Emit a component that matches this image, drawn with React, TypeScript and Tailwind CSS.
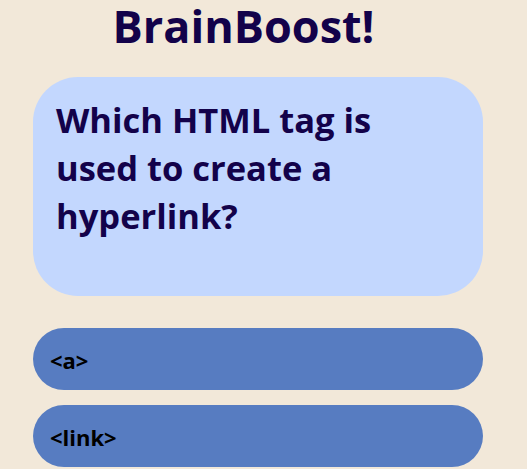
import React from "react";

export default function App() {
  return (
    <div className="min-h-[469px] w-full bg-[#f2e8d9] font-['Open_Sans','Noto_Sans',sans-serif]">
      <div className="flex flex-col pl-[33px] pr-[44px]">
        <h1 className="pr-[29px] text-center text-[45px] font-bold leading-[52px] text-[#13024a]">
          BrainBoost!
        </h1>
        <div className="mt-[25px] h-[219px] rounded-[45px] bg-[#c3d7fe] pl-[23px] pt-[19px]">
          <p className="text-[34.5px] font-bold leading-[48px] text-[#13024a]">
            Which HTML tag is
            <br />
            used to create a
            <br />
            hyperlink?
          </p>
        </div>
        <div className="mt-[32px] flex flex-col gap-[15px]">
          <button className="flex h-[62px] items-center rounded-full bg-[#577cc1] pl-[17px] pt-[3px] text-left text-[22px] font-bold text-black">
            {"<a>"}
          </button>
          <button className="flex h-[62px] items-center rounded-full bg-[#577cc1] pl-[17px] pt-[3px] text-left text-[22px] font-bold text-black">
            {"<link>"}
          </button>
        </div>
      </div>
    </div>
  );
}
